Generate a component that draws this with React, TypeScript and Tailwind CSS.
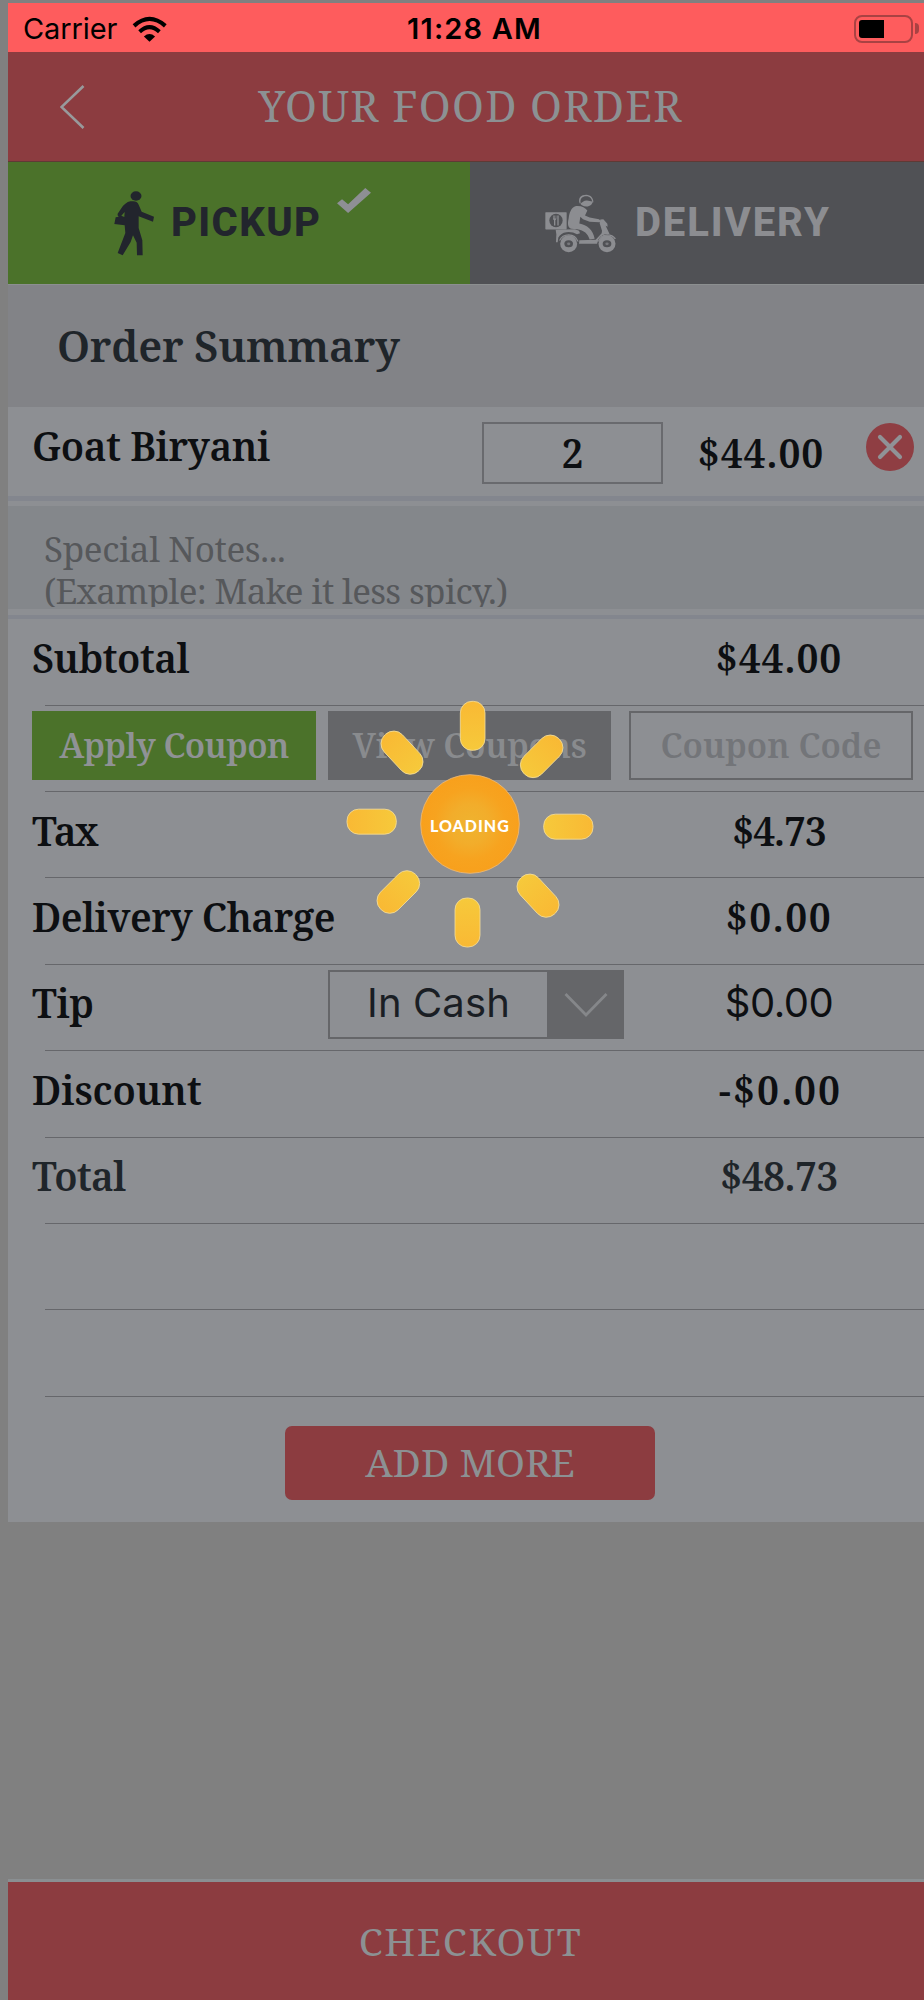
import type { ReactNode } from "react";

function WifiIcon() {
  return (
    <svg viewBox="396 43 104 79" className="h-[26px] w-[35px]" fill="none" stroke="#000">
      <path d="M401 73Q448 31 496 73" strokeWidth="12.500" />
      <path d="M418 91Q448 63 478 91" strokeWidth="12" />
      <path d="M431 105Q448 91 465 105L448 121Z" fill="#000" stroke="none" />
    </svg>
  );
}

function Battery() {
  return (
    <div className="flex items-center gap-[2px]">
      <div className="h-[28px] w-[59px] rounded-[8px] border-2 border-[#a94243] p-[3px]">
        <div className="h-full w-[25px] rounded-[3px] rounded-r-none bg-black" />
      </div>
      <div className="h-[11px] w-[4px] rounded-r-full bg-[#a94243]" />
    </div>
  );
}

function WalkerIcon() {
  return (
    <svg viewBox="40 32 126 198" className="h-[66px] w-[42px]" fill="#22252d">
      <ellipse cx="109" cy="50" rx="16.5" ry="14" />
      <path d="M92 66C82 68 71 76 65 87L54 103Q52 108 57 112L48 114L44 134L75 138L77 161L54 221L69 228L93 188L100 168L111 190L112 228L129 228L128 183L117 146L117 111L160 127L163 112L126 97L117 76Q112 66 101 66Z" />
      <path d="M75 98L65 109L74 113Z" fill="#4b722a" />
    </svg>
  );
}

function ScooterIcon() {
  return (
    <svg viewBox="44 48 216 176" className="h-[59px] w-[72px]" fill="#8c8d91">
      <rect x="45" y="102" width="64" height="52" rx="2" />
      <circle cx="77" cy="127" r="20" fill="#505155" />
      <path d="M68 112V122Q68 125 71 126V142H75V126Q78 125 78 122V112H76V121H74V112H72V121H70V112ZM81 112V142H85V112Z" />
      <path d="M148 76C142 60 152 50 168 50C181 50 190 61 189 72L186 74C186 62 178 54 168 54C156 54 148 62 151 74Z" />
      <path d="M150 76C158 72 161 66 170 67L186 70C187 78 180 85 168 85C158 85 153 81 150 76Z" />
      <path d="M135 84C151 81 164 88 171 97L164 112L178 118L206 123L212 129L207 132L178 131L158 123L150 116L147 136C170 140 188 154 193 182L178 184C172 166 162 156 140 153L122 152C111 146 112 134 115 120C117 104 122 89 135 84Z" />
      <path d="M76 155L134 153L146 158L149 165L140 168Q126 160 108 162Q92 164 84 178L82 192L77 192L78 168Z" />
      <path d="M210 124L219 123L231 137L232 146L226 143L238 168Q214 166 205 185L201 197L146 197L147 186L196 185L214 165L215 158L208 135Z" />
      <circle cx="115" cy="197" r="29" fill="#505155" />
      <circle cx="115" cy="197" r="25.500" />
      <circle cx="230" cy="197" r="29" fill="#505155" />
      <circle cx="230" cy="197" r="25.500" />
      <path d="M86 187Q94 168 115 168Q137 168 145 190L141 190Q134 173 115 172Q97 172 90 187ZM202 190Q210 168 231 168Q248 168 257 181L253 183Q245 172 231 172Q214 172 206 190Z" />
      <ellipse cx="115" cy="197" rx="13" ry="10.500" fill="#505155" />
      <ellipse cx="230" cy="197" rx="13" ry="10.500" fill="#505155" />
      <ellipse cx="115" cy="197" rx="5" ry="4" fill="#77787c" />
      <ellipse cx="230" cy="197" rx="5" ry="4" fill="#77787c" />
    </svg>
  );
}

function LoadingSun() {
  return (
    <div className="absolute left-[346px] top-[700px] h-[248px] w-[248px]">
      <svg viewBox="78 60 744 744" className="h-full w-full">
        <defs>
          <radialGradient id="core">
            <stop offset="0" stopColor="#efb32f" />
            <stop offset="0.4" stopColor="#f2ad2b" />
            <stop offset="0.72" stopColor="#f7a31f" />
            <stop offset="1" stopColor="#f8a01c" />
          </radialGradient>
          <linearGradient id="ray" x1="0" x2="0" y1="0" y2="1">
            <stop offset="0" stopColor="#f6c93b" />
            <stop offset="1" stopColor="#f9b934" />
          </linearGradient>
          <linearGradient id="rayUp" x1="0" x2="0" y1="1" y2="0">
            <stop offset="0" stopColor="#f6c93b" />
            <stop offset="1" stopColor="#f9b934" />
          </linearGradient>
          <linearGradient id="rayLeft" x1="0" x2="1" y1="0" y2="0">
            <stop offset="0" stopColor="#f9b934" />
            <stop offset="1" stopColor="#f6c93b" />
          </linearGradient>
          <linearGradient id="rayRight" x1="1" x2="0" y1="0" y2="0">
            <stop offset="0" stopColor="#f9b934" />
            <stop offset="1" stopColor="#f6c93b" />
          </linearGradient>
        </defs>
        <g stroke="#f3dc9a" strokeWidth="2.500">
          <rect x="421" y="64" width="74" height="147" rx="35" fill="url(#rayUp)" />
          <rect x="405" y="654" width="75" height="147" rx="35" fill="url(#ray)" />
          <rect x="-74" y="-37.500" width="148" height="75" rx="35" fill="url(#rayLeft)" transform="translate(155 425)" />
          <rect x="-74" y="-37.500" width="148" height="75" rx="35" fill="url(#rayRight)" transform="translate(745 440)" />
          <rect x="-37.500" y="-74" width="75" height="148" rx="36" fill="url(#rayUp)" transform="translate(246 218) rotate(-43)" />
          <rect x="-37.500" y="-74" width="75" height="148" rx="36" fill="url(#rayUp)" transform="translate(665 229) rotate(45)" />
          <rect x="-37.500" y="-74" width="75" height="148" rx="36" fill="url(#ray)" transform="translate(235 636) rotate(45)" />
          <rect x="-37.500" y="-74" width="75" height="148" rx="36" fill="url(#ray)" transform="translate(654 647) rotate(-43)" />
        </g>
        <circle cx="450" cy="432" r="148" fill="url(#core)" stroke="#e9b878" strokeWidth="2.500" />
      </svg>
      <span className="absolute left-[84px] top-[114px] whitespace-nowrap font-['Lato',sans-serif] text-[16px] leading-[24px] font-black tracking-[1px] text-white">
        LOADING
      </span>
    </div>
  );
}

function Row({ children }: { children?: ReactNode }) {
  return (
    <div className="flex h-[86.4px] flex-col">
      <div className="flex min-h-0 flex-1 items-center pb-[8px] pl-6 text-[39px] leading-[54px] font-semibold text-[#0d0f12]">
        {children}
      </div>
      <div className="ml-[37px] h-px shrink-0 bg-[#66676b]" />
    </div>
  );
}

function Amount({ children, className = "" }: { children: ReactNode; className?: string }) {
  return <span className={"ml-auto mr-[8px] w-[290px] shrink-0 text-center whitespace-nowrap " + className}>{children}</span>;
}

export default function App() {
  return (
    <div className="relative h-[2000px] w-[924px] overflow-hidden bg-[#808080] pt-[3px] pl-2 font-['Noto_Serif','Liberation_Serif',serif] whitespace-nowrap">
      <div className="flex h-[1997px] w-[924px] flex-col">
        <header className="shrink-0">
          <div className="grid h-[49px] grid-cols-3 items-center bg-[#fe5c5d] pt-[2px] pr-[13px] pl-[15px] font-['Inter',sans-serif] text-[29px] leading-[36px] text-black">
            <div className="flex items-center gap-[15px]">
              <span className="tracking-[-0.1px]">Carrier</span>
              <WifiIcon />
            </div>
            <span className="pl-[7px] text-center font-semibold tracking-[1.17px]">11:28 AM</span>
            <div className="flex justify-end">
              <Battery />
            </div>
          </div>
          <div className="flex h-[110px] items-center border-b border-[#5f3a35] bg-[#8c3c40]">
            <svg viewBox="0 0 25 44" className="ml-[52px] h-[44px] w-[25px]" fill="none" stroke="#989a9c" strokeWidth="2.600">
              <path d="M23.500 1L1.500 22L23.500 43" />
            </svg>
            <h1 className="flex-1 pr-[76px] pb-[2px] text-center text-[43px] leading-[54px] font-normal tracking-[1.25px] text-[#8c9193]">YOUR FOOD ORDER</h1>
          </div>
        </header>

        <nav className="grid h-[122px] shrink-0 grid-cols-2 font-['Roboto',sans-serif] text-[40px] leading-[48px] font-extrabold">
          <div className="flex items-center bg-[#4b722a] pl-[105px] text-[#22252d]">
            <WalkerIcon />
            <span className="ml-[16px] w-[150px] tracking-[1.4px]">PICKUP</span>
            <svg viewBox="1013 563 101 74" className="mb-[46px] ml-[16px] h-[25px] w-[34px]" fill="#8e8f94">
              <path d="M1013 608L1028 596L1046 611L1097 563L1114 577L1046 637Z" />
            </svg>
          </div>
          <div className="flex items-center bg-[#505155] pl-[75px] text-[#8c8d91]">
            <ScooterIcon />
            <span className="ml-[18px] tracking-[1.9px]">DELIVERY</span>
          </div>
        </nav>

        <h2 className="flex h-[123px] shrink-0 items-center border-t border-[#8c8f90] bg-[#828387] pl-[49px] text-[43px] leading-[60px] font-semibold tracking-[-0.3px] text-[#1f252a]">
          Order Summary
        </h2>

        <main className="shrink-0 bg-[#8d8f93]">
          <div className="flex h-[89px] items-start pl-6 text-[39px] leading-[54px] font-semibold text-[#0d0f12]">
            <span className="w-[450px] pt-[12px] tracking-[-0.49px]">Goat Biryani</span>
            <div className="mt-[15px] flex h-[62px] w-[181px] items-center justify-center border-2 border-[#696a6e]">2</div>
            <span className="mt-[19px] w-[193px] pl-[3px] text-center tracking-[1px]">$44.00</span>
            <svg viewBox="0 0 48 48" className="mt-[16px] ml-[10px] h-[48px] w-[48px]">
              <circle cx="24" cy="24" r="24" fill="#8f3e43" />
              <path d="M14 14L34 34M34 14L14 34" stroke="#909296" strokeWidth="4.200" strokeLinecap="round" />
            </svg>
          </div>
          <div className="h-[5px] bg-[#83868e]" />
          <div className="mt-[5px] h-[103px] bg-[#84878b] pl-[36px]">
            <div className="h-[101px] overflow-hidden pt-[22px] text-[35px] leading-[42px] text-[#56585b]">
              <p className="tracking-[-0.37px]">Special Notes...</p>
              <p className="tracking-[-0.66px]">(Example: Make it less spicy.)</p>
            </div>
          </div>
          <div className="mt-[6px] mb-[0.2px] h-[4px] bg-[#83868e]" />

          <Row>
            <span className="tracking-[-0.6px]">Subtotal</span>
            <Amount className="tracking-[1px]">$44.00</Amount>
          </Row>
          <Row>
            <div className="mt-[2px] flex text-[34px] leading-[48px]">
              <button className="h-[69px] w-[284px] bg-[#4b722a] tracking-[-0.6px] text-[#8f9295]">Apply Coupon</button>
              <button className="ml-3 h-[69px] w-[283px] bg-[#656669] tracking-[-0.25px] text-[#898b8e]">View Coupons</button>
              <div className="ml-[18px] flex h-[69px] w-[284px] items-center justify-center border-2 border-[#656669] text-[#737579]">Coupon Code</div>
            </div>
          </Row>
          <Row>
            <span className="tracking-[-2px]">Tax</span>
            <Amount className="tracking-[-1px]">$4.73</Amount>
          </Row>
          <Row>
            <span className="tracking-[-0.55px]">Delivery Charge</span>
            <Amount className="tracking-[1.6px]">$0.00</Amount>
          </Row>
          <Row>
            <span className="w-[296px] tracking-[-0.5px]">Tip</span>
            <div className="mt-[2px] flex h-[69px] w-[296px] border-2 border-[#656669] font-['Inter',sans-serif] text-[40px] leading-[62px] font-normal text-[#1a1e24]">
              <span className="flex-1 text-center tracking-[0.1px]">In Cash</span>
              <span className="flex w-[75px] items-center justify-center bg-[#656669] pl-[2px]">
                <svg viewBox="0 0 44 26" className="mt-[2px] h-[26px] w-[44px]" fill="none" stroke="#85878a" strokeWidth="2.800">
                  <path d="M1.500 2L22 23L42.500 2" />
                </svg>
              </span>
            </div>
            <Amount className="pb-px font-['Inter',sans-serif] text-[40px] font-normal tracking-[-0.5px]">$0.00</Amount>
          </Row>
          <Row>
            <span className="tracking-[-0.1px]">Discount</span>
            <Amount className="pl-[3px] tracking-[2.1px]">-$0.00</Amount>
          </Row>
          <div className="[&_span]:text-[#1f252a]">
            <Row>
              <span className="tracking-[-0.9px]">Total</span>
              <Amount className="tracking-[-0.5px]">$48.73</Amount>
            </Row>
          </div>
          <Row />
          <Row />
          <div className="flex h-[125.2px] justify-center pt-[29.4px]">
            <button className="h-[74px] w-[370px] rounded-[7px] bg-[#8c3c40] pb-[3px] text-[39px] leading-[54px] text-[#8c9193]">ADD MORE</button>
          </div>
        </main>

        <footer className="mt-auto flex h-[121px] shrink-0 items-center justify-center border-t-[3px] border-[#8a8f92] bg-[#8c3c40] pl-px text-[39px] leading-[54px] tracking-[1.64px] text-[#8c9193]">
          CHECKOUT
        </footer>
      </div>
      <LoadingSun />
    </div>
  );
}
